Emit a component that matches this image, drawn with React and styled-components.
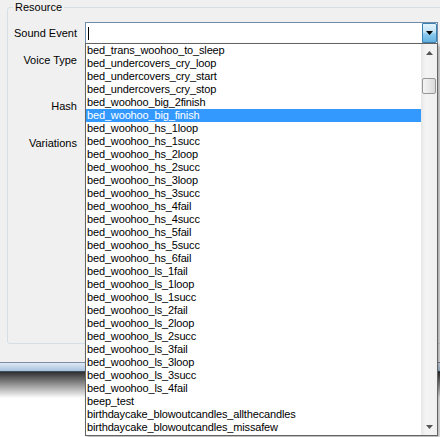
import React from 'react';
import styled, { createGlobalStyle } from 'styled-components';

const GlobalStyle = createGlobalStyle`
  html, body { margin: 0; padding: 0; background: #fff; }
  body {
    font-family: 'Liberation Sans', Arial, sans-serif;
    font-size: 11px;
    color: #000;
  }
`;

const Screen = styled.div`
  position: relative;
  width: 440px;
  height: 437px;
  overflow: hidden;
  background: #fff;
`;

const Window = styled.div`
  height: 362px;
  box-sizing: border-box;
  padding: 1px 0 0 7px;
  background: #f0f0f0;
`;

const FrameEdge = styled.div`
  height: 10px;
  box-sizing: border-box;
  border-top: 1px solid #7d8ea2;
  border-bottom: 1px solid #3f4e5e;
  background: linear-gradient(#dde9f6, #a9c2dd);
`;

const FrameShadow = styled.div`
  height: 26px;
  background: linear-gradient(rgba(30, 30, 30, 0.92), rgba(255, 255, 255, 0));
`;

const GroupBox = styled.fieldset`
  box-sizing: border-box;
  width: 445px;
  height: 343px;
  margin: 0;
  padding: 0;
  border: 1px solid #d5dfe5;
  border-radius: 3px;
`;

const Legend = styled.legend`
  margin-left: 5px;
  padding: 0 2px;
  line-height: 13px;
  font-size: 11px;
`;

const Form = styled.div`
  display: flex;
  flex-direction: column;
  padding-top: 8px;
`;

const Row = styled.div`
  display: flex;
  align-items: center;
  height: 22px;
  margin-top: ${(p) => p.$mt || 0}px;
`;

const Label = styled.div`
  flex: none;
  width: 69px;
  margin-right: 8px;
  text-align: right;
  line-height: 13px;
  white-space: nowrap;
`;

const Combo = styled.div`
  display: flex;
  box-sizing: border-box;
  width: 353px;
  height: 22px;
  border: 1px solid #6f8cab;
  background: #fff;
`;

const ComboText = styled.div`
  flex: 1;
  display: flex;
  align-items: center;
  padding-left: 2px;
`;

const Caret = styled.span`
  width: 1px;
  height: 13px;
  background: #000;
`;

const DropButton = styled.div`
  flex: none;
  display: flex;
  align-items: center;
  justify-content: center;
  box-sizing: border-box;
  width: 15px;
  border: 1px solid #3c7fb1;
  border-radius: 0 2px 2px 0;
  background: linear-gradient(#e3f3fc 0%, #c2e3f6 45%, #8ccbee 55%, #63b1e0 100%);
`;

const TextBox = styled.div`
  box-sizing: border-box;
  width: 353px;
  height: 22px;
  border: 1px solid #abadb3;
  background: #fff;
`;

const DropList = styled.div`
  position: absolute;
  top: 43px;
  left: 85px;
  width: 353px;
  height: 393px;
  box-sizing: border-box;
  display: flex;
  border: 1px solid #646464;
  background: #fff;
  box-shadow: 2px 2px 3px rgba(0, 0, 0, 0.3);
`;

const Items = styled.div`
  flex: 1;
  display: flex;
  flex-direction: column;
  overflow: hidden;
  letter-spacing: -0.15px;
`;

const Item = styled.div`
  height: 13px;
  line-height: 13px;
  padding-left: 1px;
  white-space: nowrap;
  background: ${(p) => (p.$selected ? '#3399ff' : 'transparent')};
  color: ${(p) => (p.$selected ? '#fff' : '#000')};
`;

const ScrollBar = styled.div`
  flex: none;
  width: 16px;
  display: flex;
  flex-direction: column;
  background: linear-gradient(to right, #e6e6e6, #f4f4f4 30%, #f0f0f0);
`;

const ScrollArrow = styled.div`
  flex: none;
  height: 17px;
  display: flex;
  align-items: center;
  justify-content: center;
`;

const Track = styled.div`
  flex: 1;
  display: flex;
  flex-direction: column;
`;

const Thumb = styled.div`
  box-sizing: border-box;
  height: 16px;
  margin: ${(p) => p.$offset}px 1px 0;
  border: 1px solid #979797;
  border-radius: 2px;
  background: linear-gradient(to right, #f4f4f4, #e8e8e8 50%, #d9d9d9);
`;

const Triangle = ({ up, color }) => (
  <svg width="7" height="4" viewBox="0 0 7 4">
    <polygon points={up ? '0,4 7,4 3.5,0' : '0,0 7,0 3.5,4'} fill={color} />
  </svg>
);

const events = [
  'bed_trans_woohoo_to_sleep',
  'bed_undercovers_cry_loop',
  'bed_undercovers_cry_start',
  'bed_undercovers_cry_stop',
  'bed_woohoo_big_2finish',
  'bed_woohoo_big_finish',
  'bed_woohoo_hs_1loop',
  'bed_woohoo_hs_1succ',
  'bed_woohoo_hs_2loop',
  'bed_woohoo_hs_2succ',
  'bed_woohoo_hs_3loop',
  'bed_woohoo_hs_3succ',
  'bed_woohoo_hs_4fail',
  'bed_woohoo_hs_4succ',
  'bed_woohoo_hs_5fail',
  'bed_woohoo_hs_5succ',
  'bed_woohoo_hs_6fail',
  'bed_woohoo_ls_1fail',
  'bed_woohoo_ls_1loop',
  'bed_woohoo_ls_1succ',
  'bed_woohoo_ls_2fail',
  'bed_woohoo_ls_2loop',
  'bed_woohoo_ls_2succ',
  'bed_woohoo_ls_3fail',
  'bed_woohoo_ls_3loop',
  'bed_woohoo_ls_3succ',
  'bed_woohoo_ls_4fail',
  'beep_test',
  'birthdaycake_blowoutcandles_allthecandles',
  'birthdaycake_blowoutcandles_missafew',
];

export default function App() {
  const selected = 'bed_woohoo_big_finish';

  return (
    <Screen>
      <GlobalStyle />
      <Window>
        <GroupBox>
          <Legend>Resource</Legend>
          <Form>
            <Row>
              <Label>Sound Event</Label>
              <Combo>
                <ComboText>
                  <Caret />
                </ComboText>
                <DropButton>
                  <Triangle color="#000" />
                </DropButton>
              </Combo>
            </Row>
            <Row $mt={5}>
              <Label>Voice Type</Label>
              <TextBox />
            </Row>
            <Row $mt={24}>
              <Label>Hash</Label>
              <TextBox />
            </Row>
            <Row $mt={15}>
              <Label>Variations</Label>
              <TextBox />
            </Row>
          </Form>
        </GroupBox>
      </Window>
      <FrameEdge />
      <FrameShadow />

      <DropList>
        <Items>
          {events.map((name) => (
            <Item key={name} $selected={name === selected}>
              {name}
            </Item>
          ))}
        </Items>
        <ScrollBar>
          <ScrollArrow>
            <Triangle up color="#555" />
          </ScrollArrow>
          <Track>
            <Thumb $offset={17} />
          </Track>
          <ScrollArrow>
            <Triangle color="#555" />
          </ScrollArrow>
        </ScrollBar>
      </DropList>
    </Screen>
  );
}
